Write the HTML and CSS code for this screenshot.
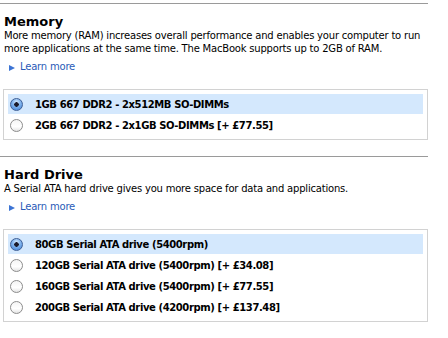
FILE: index.html
```html
<!DOCTYPE html>
<html lang="en">
<head>
    <meta charset="UTF-8">
    <meta name="viewport" content="width=device-width, initial-scale=1.0">
    <title>Configure</title>
    <link rel="stylesheet" href="styles.css">
</head>
<body>
    <div class="config">
        <div class="group">
            <h2 class="title">Memory</h2>
            <p class="desc">More memory (RAM) increases overall performance and enables your computer to run more applications at the same time. The MacBook supports up to 2GB of RAM.</p>
            <a class="learn" href="#">Learn more</a>
            <div class="options">
                <label class="option selected"><span class="radio on"></span>1GB 667 DDR2 - 2x512MB SO-DIMMs</label>
                <label class="option"><span class="radio"></span>2GB 667 DDR2 - 2x1GB SO-DIMMs [+ £77.55]</label>
            </div>
        </div>
        <div class="group">
            <h2 class="title">Hard Drive</h2>
            <p class="desc">A Serial ATA hard drive gives you more space for data and applications.</p>
            <a class="learn" href="#">Learn more</a>
            <div class="options">
                <label class="option selected"><span class="radio on"></span>80GB Serial ATA drive (5400rpm)</label>
                <label class="option"><span class="radio"></span>120GB Serial ATA drive (5400rpm) [+ £34.08]</label>
                <label class="option"><span class="radio"></span>160GB Serial ATA drive (5400rpm) [+ £77.55]</label>
                <label class="option"><span class="radio"></span>200GB Serial ATA drive (4200rpm) [+ £137.48]</label>
            </div>
        </div>
    </div>
</body>
</html>
```

FILE: styles.css
```css
body {
    margin: 0;
    background: #fff;
    color: #000;
    font-family: "DejaVu Sans", Verdana, sans-serif;
}

.config {
    width: 428px;
    padding-top: 3px;
}

.group {
    border-top: 1px solid #9a9a9a;
    padding-bottom: 16px;
}

.title {
    margin: 11px 0 0 4px;
    font-size: 13px;
    line-height: 14px;
    font-weight: bold;
}

.desc {
    margin: 0 4px;
    font-size: 10px;
    line-height: 13px;
    letter-spacing: -0.2px;
}

.learn {
    display: block;
    margin: 5px 0 0 9px;
    padding-left: 11px;
    position: relative;
    font-size: 10px;
    line-height: 14px;
    letter-spacing: -0.2px;
    color: #2a5bb8;
    text-decoration: none;
}

.learn::before {
    content: "";
    position: absolute;
    left: 0;
    top: 5px;
    border-left: 6px solid #3c74d4;
    border-top: 3px solid transparent;
    border-bottom: 3px solid transparent;
}

.options {
    display: flex;
    flex-direction: column;
    gap: 1px;
    margin: 15px 0 0 3px;
    border: 1px solid #d2d2d2;
    padding: 4px;
}

.option {
    display: flex;
    align-items: center;
    gap: 12px;
    height: 20px;
    padding-left: 2px;
    font-size: 10px;
    font-weight: bold;
    letter-spacing: -0.4px;
}

.option.selected {
    background: #d4e8fd;
}

.radio {
    width: 13px;
    height: 13px;
    box-sizing: border-box;
    border-radius: 50%;
    border: 1px solid #8c8c8c;
    background: linear-gradient(#f4f4f4, #ffffff 60%, #e4e4e4);
    flex: none;
}

.radio.on {
    border-color: #3f5f95;
    background: radial-gradient(circle at 50% 50%, #1a1a2a 0, #1a1a2a 2px, transparent 2.5px),
                radial-gradient(circle at 50% 30%, #d8ecff 0, #7fb2ec 45%, #3d7fd6 100%);
}
```
